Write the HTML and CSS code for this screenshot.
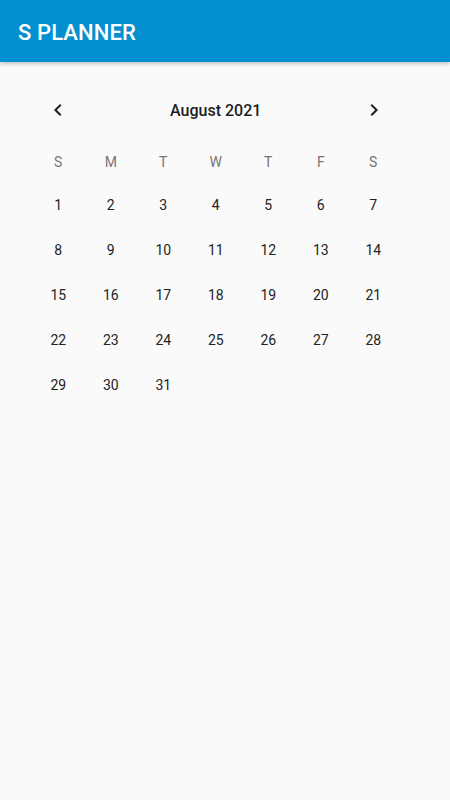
FILE: index.html
```html
<!DOCTYPE html>
<html>
<head>
<meta charset="utf-8">
<link rel="stylesheet" href="styles.css">
</head>
<body>
<header class="appbar"><h1 class="title">S PLANNER</h1></header>
<main class="calendar">
  <div class="cal-header">
    <span class="chev"><svg width="24" height="24" viewBox="0 0 24 24"><path d="M15.41 7.41 14 6l-6 6 6 6 1.41-1.41L10.83 12z" fill="#1d1d1d"/></svg></span>
    <span class="month">August 2021</span>
    <span class="chev"><svg width="24" height="24" viewBox="0 0 24 24"><path d="M10 6 8.59 7.41 13.17 12l-4.58 4.59L10 18l6-6z" fill="#1d1d1d"/></svg></span>
  </div>
  <div class="grid dow">
    <span>S</span><span>M</span><span>T</span><span>W</span><span>T</span><span>F</span><span>S</span>
  </div>
  <div class="grid days">
    <span>1</span><span>2</span><span>3</span><span>4</span><span>5</span><span>6</span><span>7</span>
    <span>8</span><span>9</span><span>10</span><span>11</span><span>12</span><span>13</span><span>14</span>
    <span>15</span><span>16</span><span>17</span><span>18</span><span>19</span><span>20</span><span>21</span>
    <span>22</span><span>23</span><span>24</span><span>25</span><span>26</span><span>27</span><span>28</span>
    <span>29</span><span>30</span><span>31</span>
  </div>
</main>
</body>
</html>
```
FILE: styles.css
```css
html, body {
  margin: 0;
  padding: 0;
  background: #fafafa;
  font-family: Roboto, "Liberation Sans", sans-serif;
  height: 100%;
}
.appbar {
  background: #0290d0;
  height: 62px;
  display: flex;
  align-items: center;
  padding-left: 18px;
  padding-top: 2px;
  box-sizing: border-box;
  box-shadow: 0 2px 4px rgba(0,0,0,0.22);
  position: relative;
}
.title {
  margin: 0;
  color: #fff;
  font-size: 22px;
  font-weight: 500;
  letter-spacing: 0.1px;
}
.calendar {
  width: 367.5px;
  margin-left: 32px;
  padding-top: 36px;
}
.cal-header {
  display: flex;
  align-items: center;
  justify-content: space-between;
  height: 24px;
  padding: 0 14px 0 14px;
}
.chev {
  display: flex;
  width: 24px;
  height: 24px;
}
.month {
  font-size: 16px;
  font-weight: 500;
  color: #1d1d1d;
}
.grid {
  display: grid;
  grid-template-columns: repeat(7, 1fr);
  text-align: center;
}
.dow {
  margin-top: 28px;
  height: 24px;
  line-height: 24px;
  font-size: 14px;
  color: #757575;
}
.days {
  margin-top: 9px;
  grid-auto-rows: 45px;
  line-height: 45px;
  font-size: 14px;
  color: #222;
}
```
